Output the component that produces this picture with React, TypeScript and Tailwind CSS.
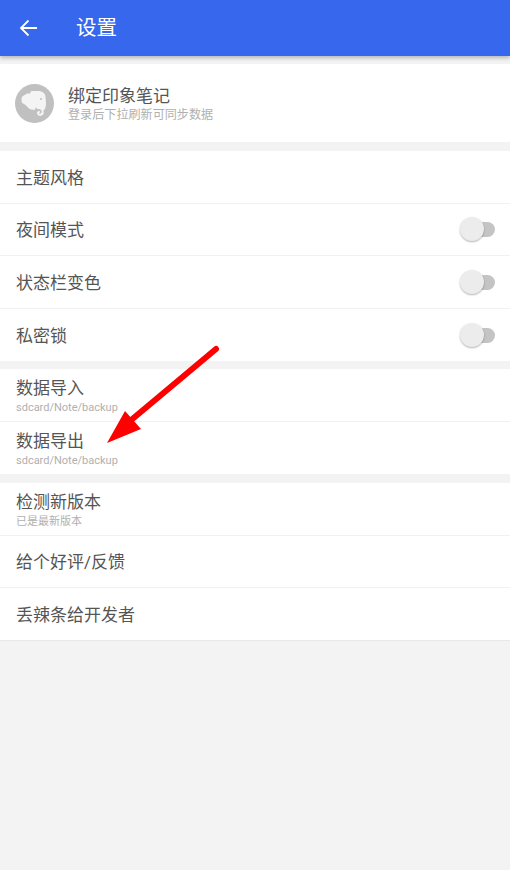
const font = { fontFamily: 'Roboto, "Noto Sans CJK SC", sans-serif' }

function Toggle() {
  return (
    <div className="relative w-[35px] h-[25px] mt-[1px] shrink-0">
      <div className="absolute left-[10px] right-0 top-[5px] h-[15px] rounded-full bg-[#c4c4c4]" />
      <div className="absolute left-0 top-0 w-[24px] h-[24px] rounded-full bg-[#ececec] shadow-[0_1px_2px_rgba(0,0,0,0.3)]" />
    </div>
  )
}

function Row({ title, sub, toggle, last, edge }: { title: string; sub?: string; toggle?: boolean; last?: boolean; edge?: boolean }) {
  return (
    <div className={`flex items-center justify-between h-[52.5px] pl-[16px] pr-[15px] bg-white ${edge ? 'border-b border-[#e8e8e8]' : last ? '' : 'border-b border-[#f1f1f1]'}`}>
      <div className="flex flex-col pt-[1.5px]">
        <div className="text-[17px] leading-[22px] text-[#555555]">{title}</div>
        {sub && <div className="mt-[2px] text-[11px] leading-[14px] text-[#b0b0b0]">{sub}</div>}
      </div>
      {toggle && <Toggle />}
    </div>
  )
}

export default function App() {
  return (
    <div style={font} className="relative w-[510px] h-[870px] bg-[#f3f3f3] overflow-hidden">
      <header className="relative z-10 flex items-center h-[56px] bg-[#3667ec] shadow-[0_2px_4px_rgba(0,0,0,0.25)]">
        <svg className="ml-[18px] w-[22px] h-[22px]" viewBox="0 0 22 22" fill="none" stroke="white" strokeWidth="1.8">
          <path d="M19 11H3M10.500 3.500 3 11l7.500 7.500" />
        </svg>
        <h1 className="ml-[36px] text-[20.5px] text-white">设置</h1>
      </header>

      <div className="flex items-center h-[78px] mt-[8px] pl-[15px] bg-white">
        <svg className="w-[39px] h-[39px] shrink-0" viewBox="0 0 39 39">
          <circle cx="19.5" cy="19.5" r="19.5" fill="#c0c0c0" />
          <path
            fill="#f4f4f4"
            d="M12 9.500h2.200c.9 0 1.400-.5 1.400-1.300 0-.7.6-1.200 1.400-1.200h5.200c4 0 7.400 1.500 8 4.300.6 3 .9 6.600.7 9.800-.2 2.800-1.200 4.600-2.600 5.600.7 1.400.6 3-.4 4.100-1.200 1.300-3.300 1.500-4.700.5-1.300-.9-1.600-2.500-.8-3.600.6-.8 1.700-.9 2.400-.4.5.4.6 1 .3 1.500l-1.100-.1c-.3.5.2 1.100.9 1.100 1.100 0 1.900-1 1.800-2.200-.1-1.400-1.400-2.400-3-2.500-1.500-.1-2.500-.8-2.900-2.200-.5 1.800-1.100 3-1.100 3-1.400-.4-5-.2-6.500-2.200C11.300 21.500 9.500 20 8 19.500c-1-.3-1.400-1.500-1.500-3-.1-1.700.1-3.100.8-4.100L12 9.500Z"
          />
          <circle cx="26" cy="15" r="1" fill="#c0c0c0" />
        </svg>
        <div className="flex flex-col pt-[2px] ml-[14px]">
          <div className="text-[17px] leading-[22px] text-[#555555]">绑定印象笔记</div>
          <div className="mt-[1px] text-[12.1px] leading-[15px] text-[#b0b0b0]">登录后下拉刷新可同步数据</div>
        </div>
      </div>

      <div className="mt-[9px]">
        <Row title="主题风格" />
        <Row title="夜间模式" toggle />
        <Row title="状态栏变色" toggle />
        <Row title="私密锁" toggle last />
      </div>

      <div className="mt-[8px]">
        <Row title="数据导入" sub="sdcard/Note/backup" />
        <Row title="数据导出" sub="sdcard/Note/backup" last />
      </div>

      <div className="mt-[9px]">
        <Row title="检测新版本" sub="已是最新版本" />
        <Row title="给个好评/反馈" />
        <Row title="丢辣条给开发者" edge />
      </div>

      {/* annotation arrow drawn over the screenshot */}
      <svg className="absolute left-0 top-0 w-[510px] h-[870px] pointer-events-none" viewBox="0 0 510 870">
        <path d="M216 349L130 421" stroke="#ff0000" strokeWidth="6" strokeLinecap="round" fill="none" />
        <path d="M107 443L125 411L141 429Z" fill="#ff0000" />
      </svg>
    </div>
  )
}
